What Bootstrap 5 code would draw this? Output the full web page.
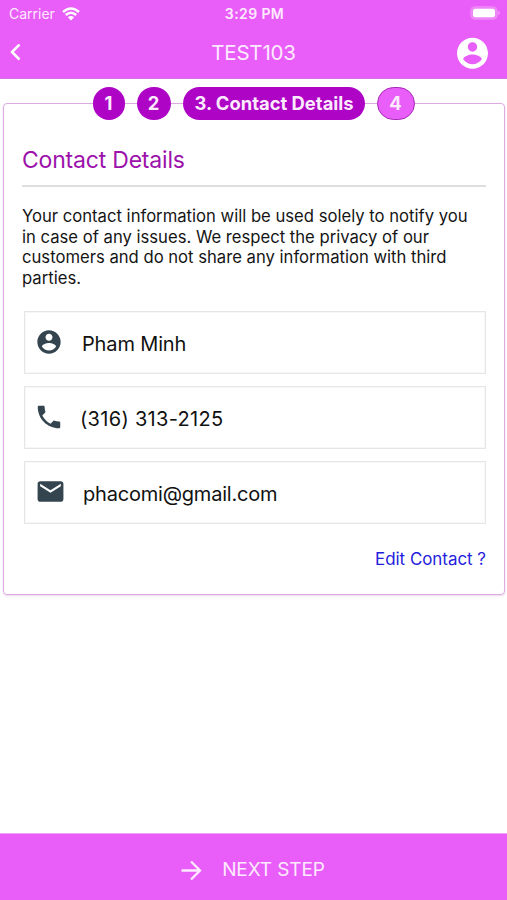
<!DOCTYPE html>
<html lang="en">
<head>
<meta charset="utf-8">
<meta name="viewport" content="width=device-width, initial-scale=1">
<title>Contact Details</title>
<link href="https://cdn.jsdelivr.net/npm/bootstrap@5.3.0/dist/css/bootstrap.min.css" rel="stylesheet">
<style>
  body { font-family: Inter, "Liberation Sans", sans-serif; color: #151515; background: #fff; height: 900px; overflow: hidden; }
  svg { display: block; flex: none; }
  .app-top { height: 79px; background: #e95ef8; color: #fdeafe; border-bottom: 1px solid #d873e4; }
  .status-row { height: 27px; padding: 0 7px 0 9px; font-size: 14px; line-height: 28px; }
  .status-row .side { flex: 1 1 0; }
  .wifi { margin-left: 7px; }
  .clock { font-weight: 600; font-size: 14px; letter-spacing: .4px; }
  .title-row { height: 52px; padding: 0 19px 0 10px; }
  .title-row .side { flex: 1 1 0; }
  .screen-title { font-size: 20.5px; letter-spacing: -.2px; line-height: 52px; padding-left: 9px; }
  .steps { margin-top: 8px; gap: 12px; height: 33px; z-index: 1; }
  .step { height: 33px; background: #ae04c5; color: #fbe9fd; font-weight: 700; font-size: 18.400px; line-height: 33px; text-align: center; border-radius: 17px; white-space: nowrap; }
  .step-a { width: 32px; } .step-b { width: 34px; } .step-c { width: 182px; padding-left: 1px; }
  .step-d { width: 38px; background: #e95ef8; border: 1px solid #a52bb5; line-height: 31px; }
  .panel { margin: -17px 2px 0 3px; height: 492px; border: 1px solid #dfa9e4; border-radius: 4px; padding: 0 18px; box-shadow: 0 1px 2px rgba(120,40,130,.18); }
  .panel-title { margin: 40px 0 0; font-size: 23px; letter-spacing: -.2px; line-height: 32px; font-weight: 400; color: #9c12ab; }
  .rule { height: 2px; background: #dedede; margin-top: 9px; }
  .intro { margin: 19px 0 0; font-size: 16.650px; line-height: 20.5px; white-space: nowrap; }
  .fields { margin: 23px 0 0 2px; gap: 12px; }
  .field { height: 63px; border: 1px solid #e6e6e6; box-shadow: inset 0 0 0 1px #f7f7f7; font-size: 20px; color: #111; }
  .field span { line-height: 60px; padding-top: 2px; }
  .ico { width: 57px; padding-left: 9.5px; margin-top: -2px; }
  .ico-phone { width: 55px; padding-left: 8.5px; }
  .f1 { letter-spacing: -.15px; } .f2 { letter-spacing: .3px; } .f3 { letter-spacing: -.2px; padding-left: 1px; }
  .edit { margin-top: 22px; font-size: 16.9px; line-height: 26px; color: #2320dc; }
  .next { height: 67px; background: #e95ef8; color: #fdeafe; font-size: 19px; letter-spacing: -.1px; border-top: 1px solid #f1a1f8; padding: 6px 1px 0 0; }
  .next-label { margin-left: 20px; }
</style>
</head>
<body class="d-flex flex-column">
<header class="app-top flex-shrink-0">
  <div class="status-row d-flex align-items-center">
    <div class="side d-flex align-items-center">
      <span>Carrier</span>
      <svg class="wifi" width="18" height="14" viewBox="0 0 18 14" fill="none" stroke="#fff" stroke-width="2.5"><path d="M1 5Q9-2 17 5M3.8 8Q9 3.4 14.2 8"/><path d="M9 13.5 5.8 10.3Q9 7.6 12.2 10.3Z" fill="#fff" stroke="none"/></svg>
    </div>
    <span class="clock">3:29 PM</span>
    <div class="side d-flex justify-content-end">
      <svg width="30" height="15" viewBox="0 0 30 15"><rect x=".7" y=".7" width="26.6" height="12.6" rx="4" fill="#ee86f7" stroke="#ee86f7"/><rect x="3" y="2.7" width="22" height="8.6" rx="2.2" fill="#fff"/><path d="M28.4 5v4q1.4-.6 1.4-2t-1.4-2" fill="#f3a2fa"/></svg>
    </div>
  </div>
  <nav class="title-row d-flex align-items-center">
    <div class="side"><svg width="11" height="18" viewBox="0 0 11 18" fill="none" stroke="#fff" stroke-width="2.5"><path d="M9.500.500 2 8l7.500 7.500"/></svg></div>
    <span class="screen-title">TEST103</span>
    <div class="side d-flex justify-content-end"><svg width="31" height="31" viewBox="2 2.200 20 20" fill="#fff" overflow="visible"><path d="M12 2C6.480 2 2 6.480 2 12s4.480 10 10 10 10-4.480 10-10S17.520 2 12 2zm0 3c1.660 0 3 1.340 3 3s-1.340 3-3 3-3-1.340-3-3 1.340-3 3-3zm0 14.200c-2.500 0-4.710-1.280-6-3.220.030-1.990 4-3.080 6-3.080 1.990 0 5.970 1.090 6 3.080-1.290 1.940-3.500 3.220-6 3.220z"/></svg></div>
  </nav>
</header>
<div class="steps d-flex justify-content-center position-relative flex-shrink-0">
  <div class="step step-a">1</div><div class="step step-b">2</div><div class="step step-c">3. Contact Details</div><div class="step step-d">4</div>
</div>
<main class="panel flex-shrink-0">
  <h1 class="panel-title">Contact Details</h1>
  <div class="rule"></div>
  <p class="intro">Your contact information will be used solely to notify you<br>in case of any issues. We respect the privacy of our<br>customers and do not share any information with third<br>parties.</p>
  <div class="fields d-flex flex-column">
    <div class="field d-flex align-items-center"><div class="ico"><svg width="28" height="28" viewBox="0 0 24 24" fill="#34454f"><path d="M12 2C6.480 2 2 6.480 2 12s4.480 10 10 10 10-4.480 10-10S17.520 2 12 2zm0 3c1.660 0 3 1.340 3 3s-1.340 3-3 3-3-1.340-3-3 1.340-3 3-3zm0 14.200c-2.500 0-4.710-1.280-6-3.220.030-1.990 4-3.080 6-3.080 1.990 0 5.970 1.090 6 3.080-1.290 1.940-3.500 3.220-6 3.220z"/></svg></div><span class="f1">Pham Minh</span></div>
    <div class="field d-flex align-items-center"><div class="ico ico-phone"><svg width="30" height="30" viewBox="0 0 24 24" fill="#34454f"><path d="M6.620 10.790c1.440 2.830 3.760 5.140 6.590 6.590l2.200-2.200c.270-.270.670-.360 1.020-.240 1.120.370 2.330.570 3.570.570.550 0 1 .450 1 1V20c0 .550-.450 1-1 1-9.390 0-17-7.610-17-17 0-.550.450-1 1-1h3.500c.550 0 1 .450 1 1 0 1.250.200 2.450.570 3.570.110.350.030.740-.250 1.020l-2.200 2.200z"/></svg></div><span class="f2">(316) 313-2125</span></div>
    <div class="field d-flex align-items-center"><div class="ico"><svg width="31" height="31" viewBox="0 0 24 24" fill="#34454f"><path d="M20 4H4c-1.100 0-1.990.900-1.990 2L2 18c0 1.100.900 2 2 2h16c1.100 0 2-.900 2-2V6c0-1.100-.900-2-2-2zm0 4l-8 5-8-5V6l8 5 8-5v2z"/></svg></div><span class="f3">phacomi@gmail.com</span></div>
  </div>
  <div class="edit text-end">Edit Contact ?</div>
</main>
<footer class="next mt-auto d-flex align-items-center justify-content-center flex-shrink-0">
  <svg width="21" height="21" viewBox="0 0 21 21" fill="none" stroke="#fdeafe" stroke-width="2.300"><path d="M.5 10.500H19M10 1.500l9 9-9 9"/></svg>
  <span class="next-label">NEXT STEP</span>
</footer>
<script src="https://cdn.jsdelivr.net/npm/bootstrap@5.3.0/dist/js/bootstrap.bundle.min.js"></script>
</body>
</html>
